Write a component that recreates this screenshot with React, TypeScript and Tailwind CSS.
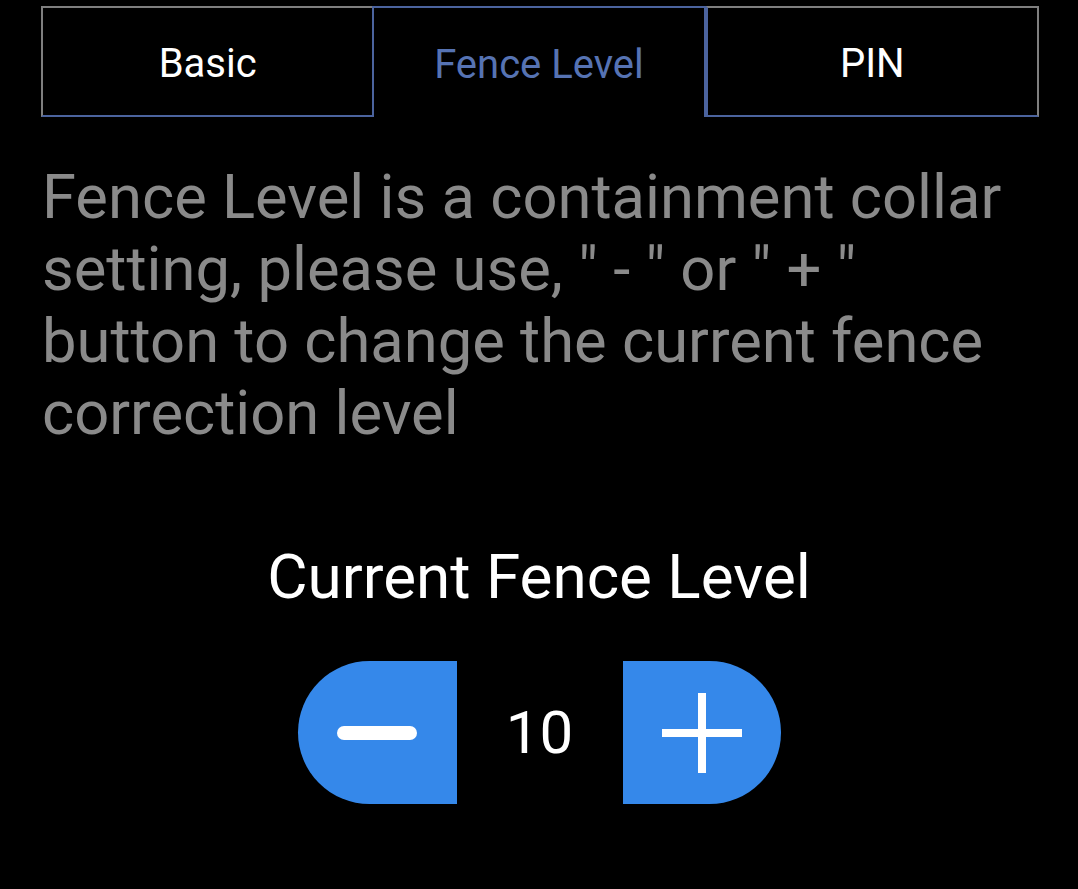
import { useState } from 'react';

const tabs = ['Basic', 'Fence Level', 'PIN'];

const App = () => {
  const [level, setLevel] = useState(10);

  return (
    <div className="min-h-screen w-full bg-black font-['Roboto',sans-serif]">
      <div className="flex pt-[6px] pr-[39px] pl-[41px]">
        <button className="flex h-[111px] flex-1 items-center justify-center border-t-2 border-l-2 border-b-2 border-t-[#7f7f7f] border-l-[#7f7f7f] border-b-[#4b639e] pt-[5px] text-[40px] text-white">
          {tabs[0]}
        </button>
        <button className="flex h-[111px] flex-1 items-center justify-center border-x-2 border-t-2 border-[#4b639e] pt-[5px] text-[40px] text-[#5673b3]">
          {tabs[1]}
        </button>
        <button className="flex h-[111px] flex-1 items-center justify-center border-2 border-l-[#4b639e] border-t-[#7f7f7f] border-r-[#7f7f7f] border-b-[#4b639e] pt-[5px] text-[40px] text-white">
          {tabs[2]}
        </button>
      </div>

      <p className="mt-[44px] px-[42px] text-[61.5px] leading-[72px] text-[#8a8a8a]">
        Fence Level is a containment collar setting, please use, " - " or " + " button to change the current fence correction level
      </p>

      <div className="mt-[92px] text-center text-[62px] leading-[72px] text-white">Current Fence Level</div>

      <div className="mt-[48px] flex items-center justify-center">
        <button
          onClick={() => setLevel((l) => Math.max(0, l - 1))}
          className="flex h-[143px] w-[159px] items-center justify-center rounded-l-[72px] bg-[#3588ea]"
        >
          <span className="block h-[14px] w-[80px] rounded-full bg-white" />
        </button>
        <div className="w-[166px] text-center text-[60px] text-white">{level}</div>
        <button
          onClick={() => setLevel((l) => l + 1)}
          className="flex h-[143px] w-[158px] items-center justify-center rounded-r-[72px] bg-[#3588ea]"
        >
          <svg width="80" height="80" viewBox="0 0 80 80">
            <rect x="0" y="36" width="80" height="8" fill="white" />
            <rect x="36" y="0" width="8" height="80" fill="white" />
          </svg>
        </button>
      </div>
    </div>
  );
};

export default App;
